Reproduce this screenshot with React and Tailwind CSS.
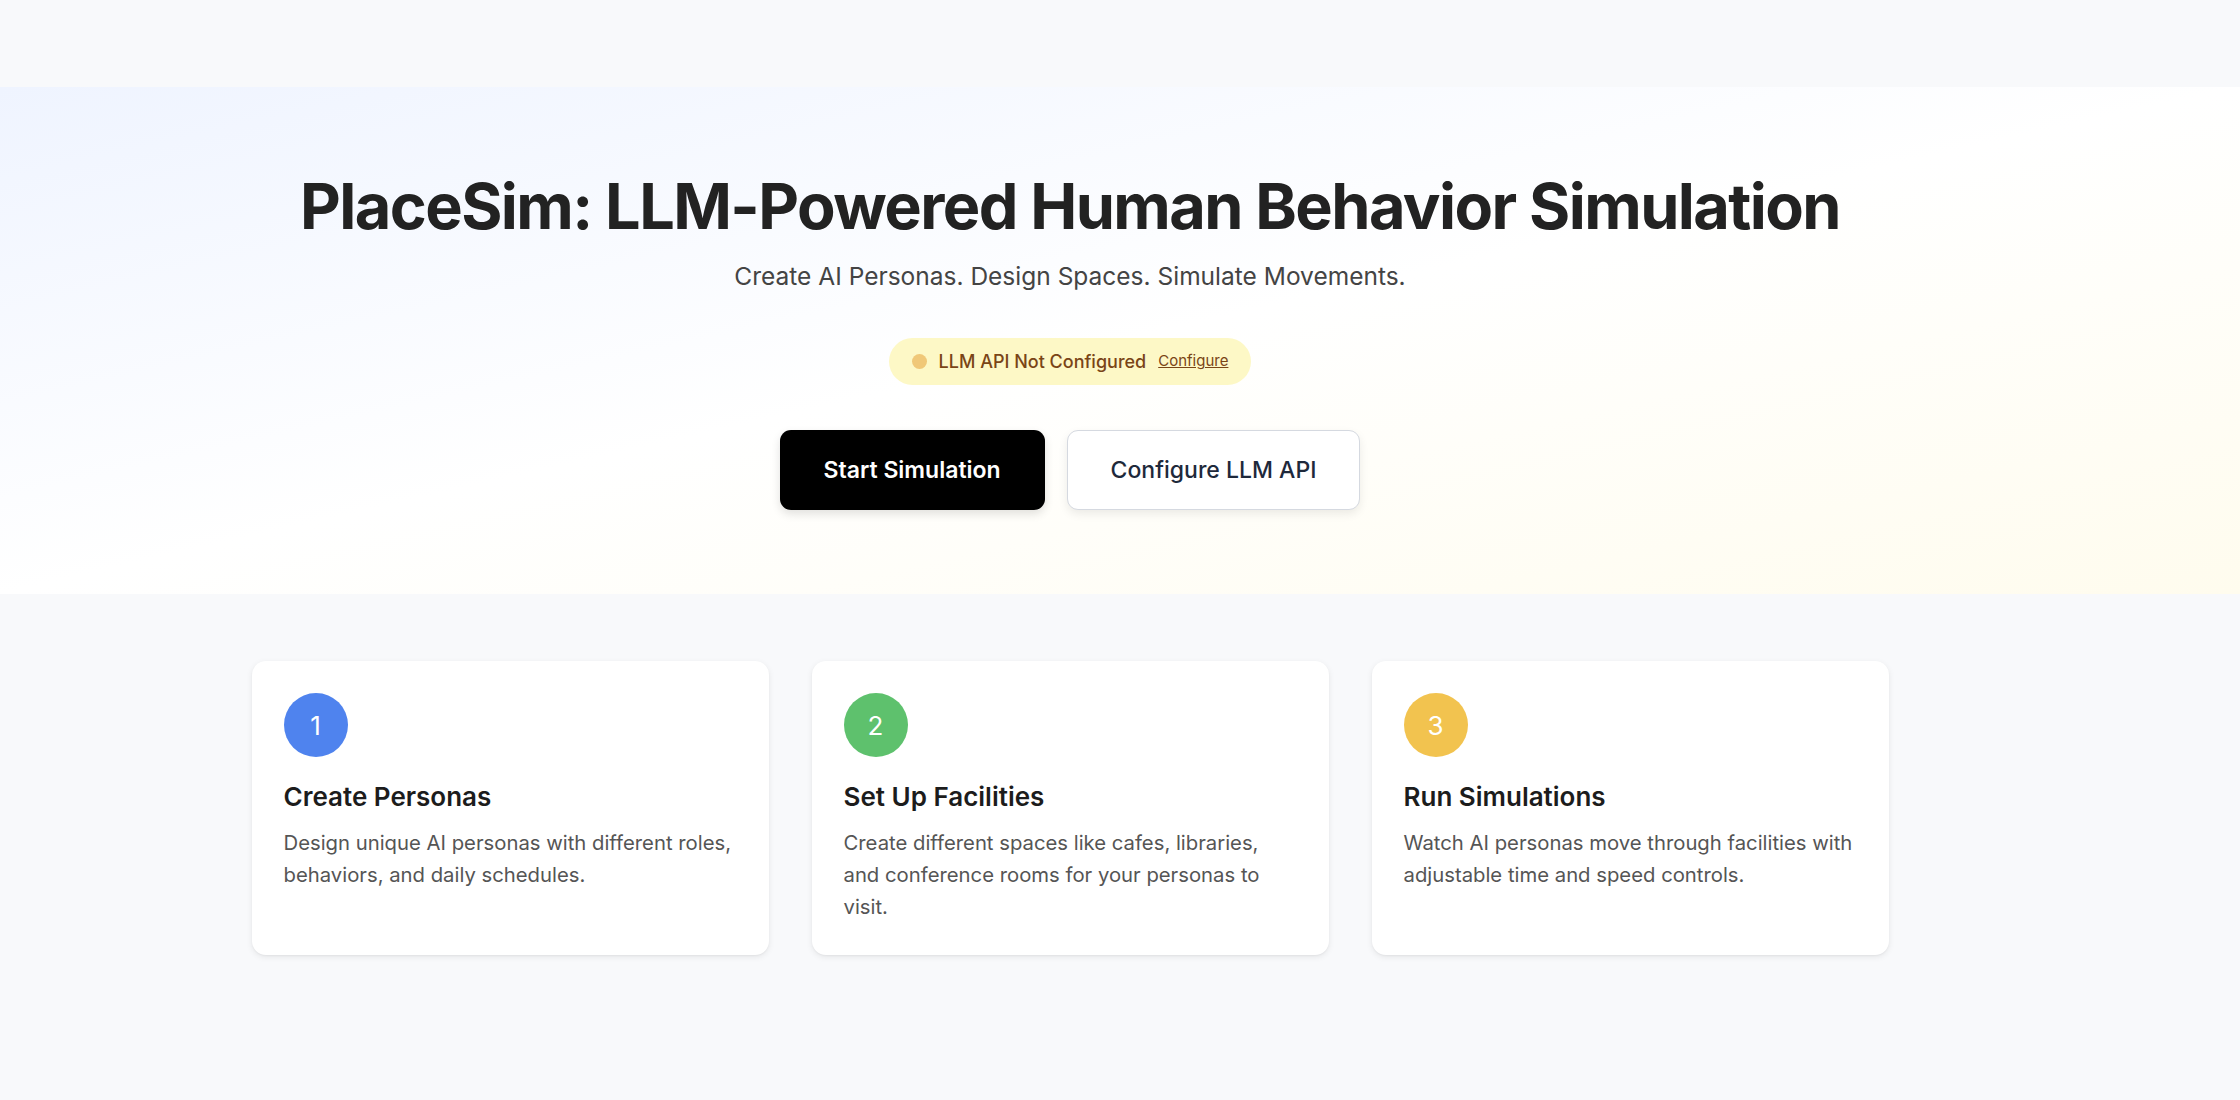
const steps = [
  {
    n: 1,
    title: "Create Personas",
    text: "Design unique AI personas with different roles, behaviors, and daily schedules.",
    dot: "bg-[#4f83ee]",
  },
  {
    n: 2,
    title: "Set Up Facilities",
    text: "Create different spaces like cafes, libraries, and conference rooms for your personas to visit.",
    dot: "bg-[#5ec16d]",
  },
  {
    n: 3,
    title: "Run Simulations",
    text: "Watch AI personas move through facilities with adjustable time and speed controls.",
    dot: "bg-[#f2c34f]",
  },
];

function StepCard({ step }) {
  return (
    <div className="w-[517px] h-[294px] rounded-[14px] bg-white p-[32px] shadow-[0_2px_6px_rgba(0,0,0,0.08),0_1px_2px_rgba(0,0,0,0.04)]">
      <div className={`flex h-[64px] w-[64px] items-center justify-center rounded-full text-[26px] text-white ${step.dot}`}>
        {step.n}
      </div>
      <h3 className="mt-[24px] text-[26px] font-semibold leading-[32px] text-[#1c1c1c]">{step.title}</h3>
      <p className="mt-[14px] text-[20.3px] leading-[32px] text-[#555555]">{step.text}</p>
    </div>
  );
}

export default function App() {
  return (
    <div className="min-h-screen bg-[#f8f9fb] font-['Inter',sans-serif]">
      <div className="h-[87px]" />

      {/* Hero */}
      <section className="bg-linear-to-br from-[#eff4ff] via-white to-[#fffcee]">
        <div className="flex w-[2140px] flex-col items-center pt-[84px] pb-[84px]">
          <h1 className="text-[63px] font-bold leading-[70px] tracking-tight text-[#222222]">
            PlaceSim: LLM-Powered Human Behavior Simulation
          </h1>
          <p className="mt-[19px] text-[24.5px] leading-[32px] text-[#444444]">
            Create AI Personas. Design Spaces. Simulate Movements.
          </p>

          <div className="mt-[46px] flex h-[47px] items-center gap-[12px] rounded-full bg-[#fdf8c6] px-[23px]">
            <span className="h-[15px] w-[15px] rounded-full bg-[#f0c878]" />
            <span className="text-[18px] font-medium text-[#7a4516]">LLM API Not Configured</span>
            <a href="#" className="text-[15px] text-[#7a4516] underline">Configure</a>
          </div>

          <div className="mt-[45px] flex gap-[22px]">
            <button className="h-[80px] rounded-[11px] bg-black px-[44px] text-[23px] font-semibold text-white shadow-[0_4px_10px_rgba(0,0,0,0.12)]">
              Start Simulation
            </button>
            <button className="h-[80px] rounded-[11px] border border-[#d5d9e0] bg-white px-[43px] text-[23px] font-medium text-[#1e293b] shadow-[0_4px_10px_rgba(0,0,0,0.08)]">
              Configure LLM API
            </button>
          </div>
        </div>
      </section>

      {/* Steps */}
      <div className="w-[2140px] pt-[67px] pb-[146px]">
        <div className="mx-auto flex w-[1637px] gap-[43px]">
          {steps.map((s) => (
            <StepCard key={s.n} step={s} />
          ))}
        </div>
      </div>
    </div>
  );
}
